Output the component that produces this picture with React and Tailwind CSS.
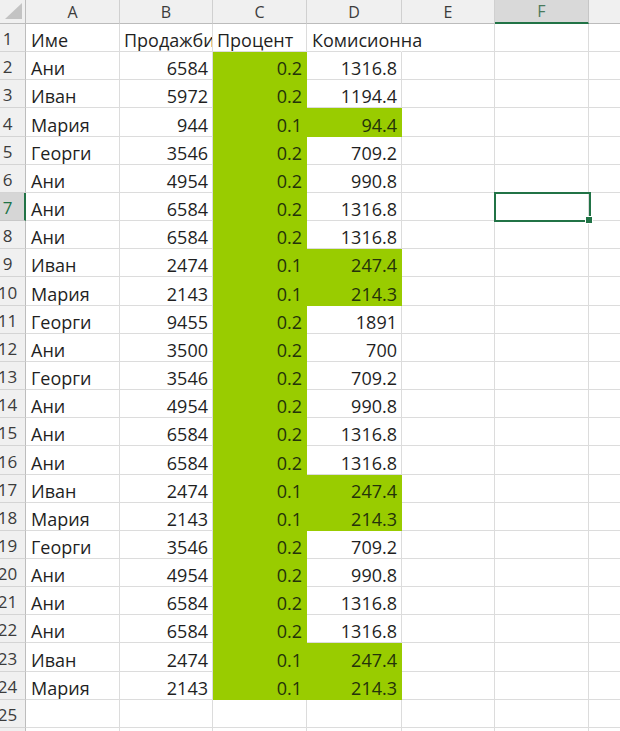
import React from "react";

const data = [
  ["Ани", 6584, "0.2", "1316.8"],
  ["Иван", 5972, "0.2", "1194.4"],
  ["Мария", 944, "0.1", "94.4"],
  ["Георги", 3546, "0.2", "709.2"],
  ["Ани", 4954, "0.2", "990.8"],
  ["Ани", 6584, "0.2", "1316.8"],
  ["Ани", 6584, "0.2", "1316.8"],
  ["Иван", 2474, "0.1", "247.4"],
  ["Мария", 2143, "0.1", "214.3"],
  ["Георги", 9455, "0.2", "1891"],
  ["Ани", 3500, "0.2", "700"],
  ["Георги", 3546, "0.2", "709.2"],
  ["Ани", 4954, "0.2", "990.8"],
  ["Ани", 6584, "0.2", "1316.8"],
  ["Ани", 6584, "0.2", "1316.8"],
  ["Иван", 2474, "0.1", "247.4"],
  ["Мария", 2143, "0.1", "214.3"],
  ["Георги", 3546, "0.2", "709.2"],
  ["Ани", 4954, "0.2", "990.8"],
  ["Ани", 6584, "0.2", "1316.8"],
  ["Ани", 6584, "0.2", "1316.8"],
  ["Иван", 2474, "0.1", "247.4"],
  ["Мария", 2143, "0.1", "214.3"],
];

const base =
  "h-[28.17px] border-r border-b flex items-end pb-[2px] leading-[18px] text-[18px] whitespace-nowrap overflow-hidden";
const white = "border-[#dcdcdc] text-[#1f1f1f]";
const green = "border-[#99cc00] bg-[#99cc00] text-[#24330a]";

function RowHeader({ n, selected }) {
  return (
    <div
      className={
        "h-[28.17px] border-b overflow-hidden flex items-end pb-[3px] " +
        (selected
          ? "bg-[#d6d6d6] border-[#c8c8c8] border-r-2 border-r-[#217346] text-[#217346]"
          : "bg-[#f0f0f0] border-[#d4d4d4] border-r border-r-[#bdbdbd] text-[#3c3c3c]")
      }
    >
      <div className="-ml-[11px] w-[37px] shrink-0 text-center text-[17px] leading-[18px]">{n}</div>
    </div>
  );
}

function ColHeader({ label, selected, last }) {
  return (
    <div
      className={
        "h-[24px] flex items-center justify-center text-[16px] " +
        (last ? "" : "border-r ") +
        (selected
          ? "bg-[#d9d9d9] border-[#c6c6c6] border-b-2 border-b-[#217346] text-[#4a7a5c]"
          : "bg-[#f0f0f0] border-[#d0d0d0] border-b border-b-[#bcbcbc] text-[#3c3c3c]")
      }
    >
      {label}
    </div>
  );
}

export default function App() {
  return (
    <div
      className="w-[620px] h-[731px] overflow-hidden bg-white"
      style={{ fontFamily: '"Open Sans", "Liberation Sans", sans-serif' }}
    >
      <div className="grid grid-cols-[26px_94px_93px_94px_95px_93px_94px_31px]">
        <div className="h-[24px] bg-[#f0f0f0] border-r border-b border-[#bcbcbc] flex items-end justify-end pr-[3px] pb-[4px]">
          <svg width="17" height="16" viewBox="0 0 17 16">
            <polygon points="17,0 17,16 0,16" fill="#c3c3c3" />
          </svg>
        </div>
        <ColHeader label="A" />
        <ColHeader label="B" />
        <ColHeader label="C" />
        <ColHeader label="D" />
        <ColHeader label="E" />
        <ColHeader label="F" selected />
        <ColHeader label="" last />

        {/* Row 1 */}
        <RowHeader n={1} />
        <div className={`${base} ${white} px-[5px]`}>Име</div>
        <div className={`${base} ${white} px-[4px]`}>Продажби</div>
        <div className={`${base} ${white} px-[4px]`}>Процент</div>
        <div className={`${base} border-[#dcdcdc] border-r-white text-[#1f1f1f] px-[5px] overflow-visible relative z-10`}>
          Комисионна
        </div>
        <div className={`${base} ${white}`}></div>
        <div className={`${base} ${white}`}></div>
        <div className={`${base} border-[#dcdcdc] border-r-0`}></div>

        {data.map((r, i) => {
          const n = i + 2;
          const low = r[2] === "0.1";
          return (
            <React.Fragment key={n}>
              <RowHeader n={n} selected={n === 7} />
              <div className={`${base} ${white} px-[5px]`}>{r[0]}</div>
              <div className={`${base} ${white} justify-end pr-[4px]`}>{r[1]}</div>
              <div className={`${base} ${green} justify-end pr-[4px]`}>{r[2]}</div>
              <div className={`${base} ${low ? green : white} justify-end pr-[4px]`}>{r[3]}</div>
              <div className={`${base} ${white}`}></div>
              <div className={`${base} ${white} relative overflow-visible`}>
                {n === 7 && (
                  <div className="absolute -left-[1px] -top-[1px] w-[97px] h-[30px] border-2 border-[#217346] z-20">
                    <div className="absolute -right-[4px] -bottom-[4px] w-[6px] h-[6px] bg-[#217346] border border-white box-content" />
                  </div>
                )}
              </div>
              <div className={`${base} border-[#dcdcdc] border-r-0`}></div>
            </React.Fragment>
          );
        })}

        {[25, 26].map((n) => (
          <React.Fragment key={n}>
            <RowHeader n={n} />
            <div className={`${base} ${white}`}></div>
            <div className={`${base} ${white}`}></div>
            <div className={`${base} ${white}`}></div>
            <div className={`${base} ${white}`}></div>
            <div className={`${base} ${white}`}></div>
            <div className={`${base} ${white}`}></div>
            <div className={`${base} border-[#dcdcdc] border-r-0`}></div>
          </React.Fragment>
        ))}
      </div>
    </div>
  );
}
